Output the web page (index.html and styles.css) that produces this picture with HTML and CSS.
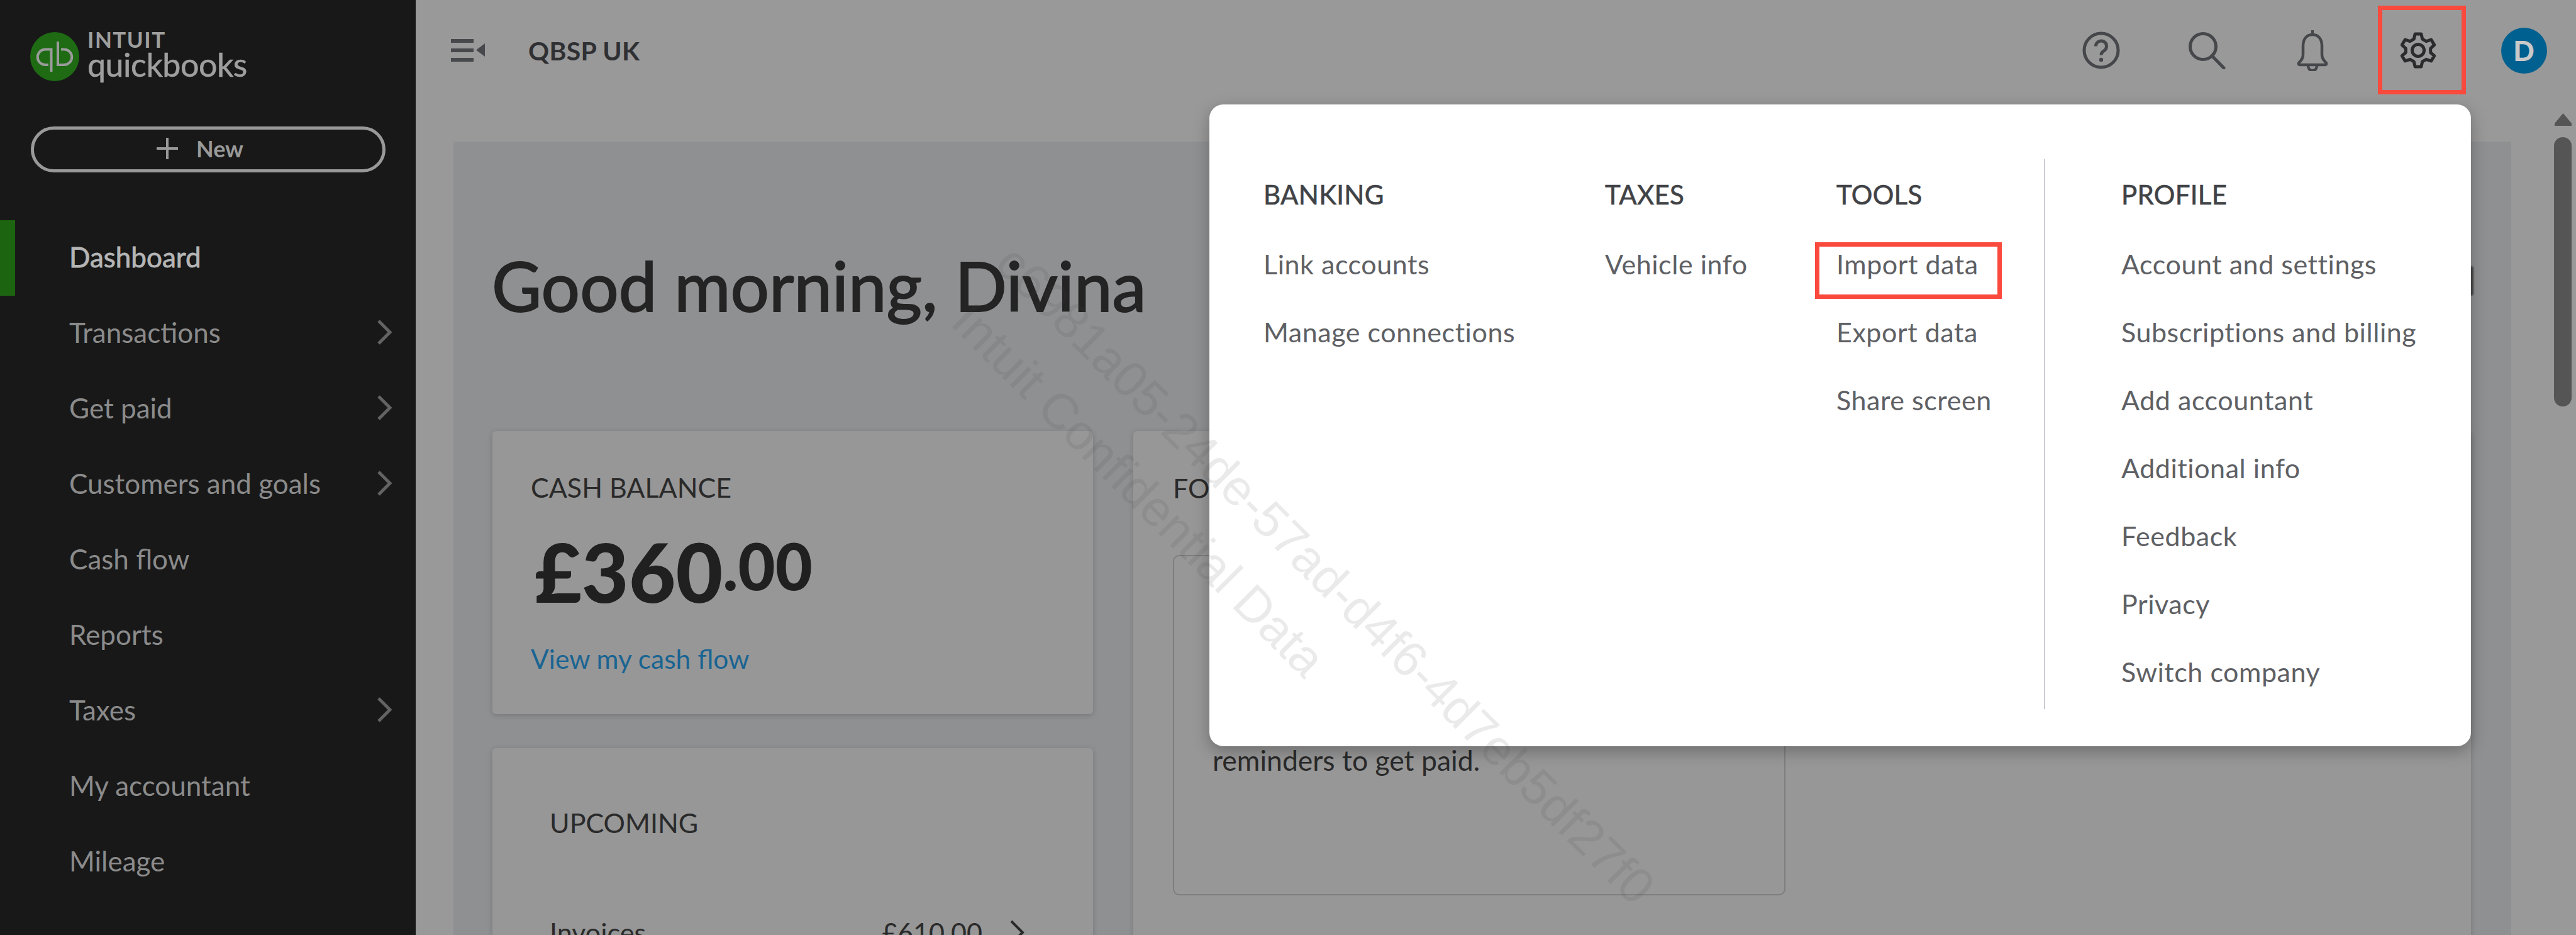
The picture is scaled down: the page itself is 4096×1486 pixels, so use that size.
FILE: index.html
```html
<!DOCTYPE html>
<html lang="en">
<head>
<meta charset="utf-8">
<title>QuickBooks Dashboard</title>
<link rel="stylesheet" href="styles.css">
</head>
<body>
<div class="app">
  <aside class="sidebar">
    <div class="logo">
      <svg class="logo-mark" viewBox="0 0 78 78" aria-hidden="true">
        <circle cx="39" cy="39" r="39" fill="#1e6b14"/>
        <path d="M29 52H24a12.250 12.250 0 0 1 0-24.500h9.500V63" fill="none" stroke="#9b9b9b" stroke-width="4"/>
        <path d="M49 27.500h5a12.250 12.250 0 0 1 0 24.500H44V15" fill="none" stroke="#9b9b9b" stroke-width="4"/>
      </svg>
      <div class="logo-text">
        <span class="logo-intuit">INTUIT</span>
        <span class="logo-qb">quickbooks</span>
      </div>
    </div>
    <button class="new-btn"><span class="new-plus"></span><span>New</span></button>
    <nav class="nav">
      <div class="nav-item active"><span>Dashboard</span></div>
      <div class="nav-item"><span>Transactions</span><svg class="chev" viewBox="0 0 24 42"><path d="M3 3l18 18L3 39"/></svg></div>
      <div class="nav-item"><span>Get paid</span><svg class="chev" viewBox="0 0 24 42"><path d="M3 3l18 18L3 39"/></svg></div>
      <div class="nav-item"><span>Customers and goals</span><svg class="chev" viewBox="0 0 24 42"><path d="M3 3l18 18L3 39"/></svg></div>
      <div class="nav-item"><span>Cash flow</span></div>
      <div class="nav-item"><span>Reports</span></div>
      <div class="nav-item"><span>Taxes</span><svg class="chev" viewBox="0 0 24 42"><path d="M3 3l18 18L3 39"/></svg></div>
      <div class="nav-item"><span>My accountant</span></div>
      <div class="nav-item"><span>Mileage</span></div>
    </nav>
  </aside>

  <main class="main">
    <header class="topbar">
      <div class="top-left">
        <svg class="menu-icon" viewBox="0 0 54 36" aria-hidden="true">
          <rect x="0" y="0" width="36" height="6" fill="#47484c"/>
          <rect x="0" y="15" width="36" height="6" fill="#47484c"/>
          <rect x="0" y="30" width="36" height="6" fill="#47484c"/>
          <path d="M54 7v21l-14-10.500z" fill="#47484c"/>
        </svg>
        <span class="company">QBSP UK</span>
      </div>
      <div class="top-right">
        <div class="icon-btn">
          <svg class="ic" viewBox="0 0 60 60"><circle cx="30" cy="30" r="27" fill="none" stroke="#45474b" stroke-width="5"/><path d="M21.500 23.500a8.500 8.500 0 1 1 13 7.200c-3 1.900-4.500 3.300-4.500 6.800" fill="none" stroke="#45474b" stroke-width="5"/><circle cx="30" cy="45" r="3.200" fill="#45474b"/></svg>
        </div>
        <div class="icon-btn">
          <svg class="ic" viewBox="0 0 60 60"><circle cx="24" cy="24" r="20.500" fill="none" stroke="#45474b" stroke-width="5"/><path d="M38 38.500L57 58" fill="none" stroke="#45474b" stroke-width="5" stroke-linecap="round"/></svg>
        </div>
        <div class="icon-btn">
          <svg class="ic-bell" viewBox="0 0 50 66"><path d="M25 8c-10 0-15 8-15 18v14c0 6-3 9-6 12-2 2-1 4 1 4h40c2 0 3-2 1-4-3-3-6-6-6-12V26c0-10-5-18-15-18z" fill="none" stroke="#45474b" stroke-width="4.500"/><path d="M25 1v7" stroke="#45474b" stroke-width="4"/><path d="M18 57c0 5 3 8 7 8s7-3 7-8" fill="none" stroke="#45474b" stroke-width="4.500"/></svg>
        </div>
        <div class="icon-btn">
          <svg class="ic" viewBox="0 0 60 60"><polygon points="25.100,4 34.900,4 36.800,12.200 42.900,15.700 50.700,13 55.700,21.400 49.700,27 49.700,33.500 55.700,38.600 50.700,47 42.900,44.300 36.800,47.800 34.900,56 25.100,56 23.200,47.800 17.100,44.300 9.300,47 4.300,38.600 10.300,33.500 10.300,27 4.300,21.400 9.300,13 17.100,15.700 23.200,12.200" fill="none" stroke="#2b2b2d" stroke-width="5" stroke-linejoin="round"/><circle cx="30" cy="30" r="9.500" fill="none" stroke="#2b2b2d" stroke-width="5"/></svg>
        </div>
        <div class="icon-btn"><span class="avatar">D</span></div>
      </div>
    </header>

    <section class="panel">
      <h1 class="greeting">Good morning, Divina</h1>
      <div class="cols">
        <div class="col-left">
          <div class="card balance">
            <div class="card-label">CASH BALANCE</div>
            <div class="amount">£360<sup class="cents">.00</sup></div>
            <a class="link">View my cash flow</a>
          </div>
          <div class="card upcoming">
            <div class="card-label">UPCOMING</div>
            <div class="up-row"><span>Invoices</span><span class="up-val">£610.00<svg class="up-chev" viewBox="0 0 24 42"><path d="M3 3l18 18L3 39"/></svg></span></div>
          </div>
        </div>
        <div class="card foryou">
          <div class="card-label">FOR YOU</div>
          <div class="inner"><p class="inner-text">reminders to get paid.</p></div>
        </div>
      </div>
    </section>
  </main>
</div>

<div class="scroll-arrow"></div>
<div class="scroll-thumb"></div>

<div class="sliver"></div>
<div class="popup">
  <div class="pcol pcol-banking">
    <div class="phead">BANKING</div>
    <div class="prow">Link accounts</div>
    <div class="prow">Manage connections</div>
  </div>
  <div class="pcol pcol-taxes">
    <div class="phead">TAXES</div>
    <div class="prow">Vehicle info</div>
  </div>
  <div class="pcol pcol-tools">
    <div class="phead">TOOLS</div>
    <div class="prow">Import data</div>
    <div class="prow">Export data</div>
    <div class="prow">Share screen</div>
  </div>
  <div class="pcol pcol-profile">
    <div class="phead">PROFILE</div>
    <div class="prow">Account and settings</div>
    <div class="prow">Subscriptions and billing</div>
    <div class="prow">Add accountant</div>
    <div class="prow">Additional info</div>
    <div class="prow">Feedback</div>
    <div class="prow">Privacy</div>
    <div class="prow">Switch company</div>
  </div>
</div>

<div class="mark mark-gear"></div>
<div class="mark mark-import"></div>

<div class="wm wm-id">c6981a05-24de-57ad-d4f6-4d7eb5df27f0</div>
<div class="wm wm-conf">Intuit Confidential Data</div>
</body>
</html>
```
FILE: styles.css
```css
* { box-sizing: border-box; }
html, body { margin: 0; padding: 0; height: 1486px; overflow: hidden; background: #999; }
body { font-family: "Lato", "Liberation Sans", sans-serif; position: relative; }
.app { display: flex; width: 4096px; height: 1486px; overflow: hidden; }

/* sidebar */
.sidebar { width: 661px; flex: none; background: #181818; color: #8b8b8b; display: flex; flex-direction: column; }
.logo { display: flex; align-items: flex-start; gap: 13px; padding: 51px 0 0 48px; height: 201px; }
.logo-mark { width: 78px; height: 78px; flex: none; }
.logo-text { display: flex; flex-direction: column; margin-top: -6px; color: #9f9f9f; }
.logo-intuit { font-size: 35px; line-height: 34px; font-weight: 700; letter-spacing: 1.5px; }
.logo-qb { font-size: 52px; line-height: 46px; font-weight: 400; letter-spacing: -0.5px; -webkit-text-stroke: 0.6px #9f9f9f; }
.new-btn { width: 564px; height: 73px; margin-left: 49px; border: 5px solid #999; border-radius: 37px; background: transparent; color: #999; font: 700 36px "Lato", sans-serif; display: flex; align-items: center; justify-content: center; gap: 29px; padding: 0 26px 4px 0; }
.new-plus { width: 34px; height: 34px; background: linear-gradient(#999,#999) center/100% 4px no-repeat, linear-gradient(#999,#999) center/4px 100% no-repeat; }
.nav { margin-top: 76px; }
.nav-item { height: 120px; display: flex; align-items: center; justify-content: space-between; padding: 0 38px 4px 110px; font-size: 44px; }
.nav-item.active { color: #b5b5b5; -webkit-text-stroke: 0.8px #b5b5b5; border-left: 24px solid #1d6410; padding-left: 86px; }
.chev { width: 24px; height: 42px; }
.chev path { fill: none; stroke: #636363; stroke-width: 5; }

/* main */
.main { flex: 1; min-width: 0; display: flex; flex-direction: column; }
.topbar { height: 225px; flex: none; display: flex; justify-content: space-between; align-items: flex-start; }
.top-left { display: flex; align-items: center; height: 160px; padding-left: 56px; }
.menu-icon { width: 54px; height: 36px; }
.company { margin-left: 69px; font-size: 41px; font-weight: 700; color: #2f3033; letter-spacing: 0.3px; }
.top-right { display: flex; margin-right: -1px; }
.icon-btn { width: 168px; height: 160px; display: flex; align-items: center; justify-content: center; }
.ic { width: 60px; height: 60px; }
.ic-bell { width: 50px; height: 66px; }
.avatar { width: 73px; height: 73px; border-radius: 50%; background: #00608f; color: #c9c9c9; font-size: 44px; font-weight: 900; display: flex; align-items: center; justify-content: center; }

.panel { flex: 1; margin: 0 103px 0 60px; padding: 168px 64px 0 61px; background: #8f9092; min-height: 0; }
.greeting { margin: 0 0 172px; height: 120px; line-height: 120px; font-size: 108.500px; font-weight: 400; -webkit-text-stroke: 2px #242424; color: #242424; }
.cols { display: flex; gap: 64px; align-items: flex-start; margin-left: 1px; }
.col-left { width: 955px; flex: none; display: flex; flex-direction: column; gap: 54px; }
.card { background: #979797; border-radius: 6px; box-shadow: 0 2px 8px rgba(0,0,0,.18); color: #2a2a2a; }
.card-label { font-size: 43px; line-height: 50px; color: #2a2a2a; }
.balance { height: 450px; padding: 65px 61px 0; }
.amount { font-size: 129px; line-height: 130px; font-weight: 900; color: #202020; margin-top: 43px; margin-left: 6px; }
.cents { font-size: 102px; font-weight: 900; vertical-align: baseline; position: relative; top: -20px; line-height: 0; }
.link { display: block; font-size: 42.500px; line-height: 50px; color: #1a6492; margin-top: 49px; }
.upcoming { height: 600px; padding: 94px 176px 0 91px; }
.up-row { display: flex; justify-content: space-between; font-size: 43px; line-height: 50px; margin-top: 124px; color: #2a2a2a; }
.up-val { display: flex; align-items: center; gap: 43px; margin-right: -67px; }
.up-chev { width: 24px; height: 42px; }
.up-chev path { fill: none; stroke: #2a2a2a; stroke-width: 4; }
.foryou { flex: 1; height: 1000px; padding: 66px 0 0 63px; }
.inner { margin-top: 81px; width: 974px; height: 541px; border: 2px solid #7d7e80; border-radius: 10px; padding: 294px 0 0 61px; }
.inner-text { margin: 0; font-size: 44.500px; line-height: 60px; color: #2a2a2a; }

/* scrollbar */
.scroll-arrow { position: absolute; left: 4062px; top: 180px; width: 27px; height: 20px; background: #555; clip-path: polygon(50% 0, 100% 80%, 100% 100%, 0 100%, 0 80%); }
.scroll-thumb { position: absolute; left: 4061px; top: 218px; width: 28px; height: 428px; background: #555; border-radius: 14px; }

/* popup */
.sliver { position: absolute; left: 3925px; top: 423px; width: 8px; height: 47px; border-radius: 4px; background: #4a4a4a; filter: blur(1px); }
.popup { position: absolute; left: 1923px; top: 166px; width: 2006px; height: 1020px; background: #fff; border-radius: 22px; box-shadow: 0 8px 26px rgba(0,0,0,.28); display: flex; padding: 87px 0 0 86px; color: #5e6064; }
.pcol { display: flex; flex-direction: column; }
.pcol-banking { width: 543px; }
.pcol-taxes { width: 368px; }
.pcol-tools { width: 330px; height: 874px; }
.pcol-profile { border-left: 2px solid #c9ccd2; height: 874px; padding-left: 121px; }
.phead { height: 113px; line-height: 113px; font-size: 42px; color: #404246; -webkit-text-stroke: 0.6px #404246; letter-spacing: 0.3px; }
.prow { height: 108px; line-height: 108px; font-size: 43px; letter-spacing: 0.55px; white-space: nowrap; }

/* annotations */
.mark { position: absolute; border: 7px solid #fa4a3d; }
.mark-gear { left: 3781px; top: 9px; width: 140px; height: 141px; }
.mark-import { left: 2886px; top: 385px; width: 297px; height: 90px; }

/* watermark */
.wm { position: absolute; font-family: "Liberation Sans", sans-serif; font-size: 79px; line-height: 80px; color: rgba(60,60,60,.11); white-space: nowrap; transform-origin: 0 50%; transform: rotate(45deg); pointer-events: none; }
.wm-id { left: 1598px; top: 364px; }
.wm-conf { left: 1528px; top: 456px; }
```
